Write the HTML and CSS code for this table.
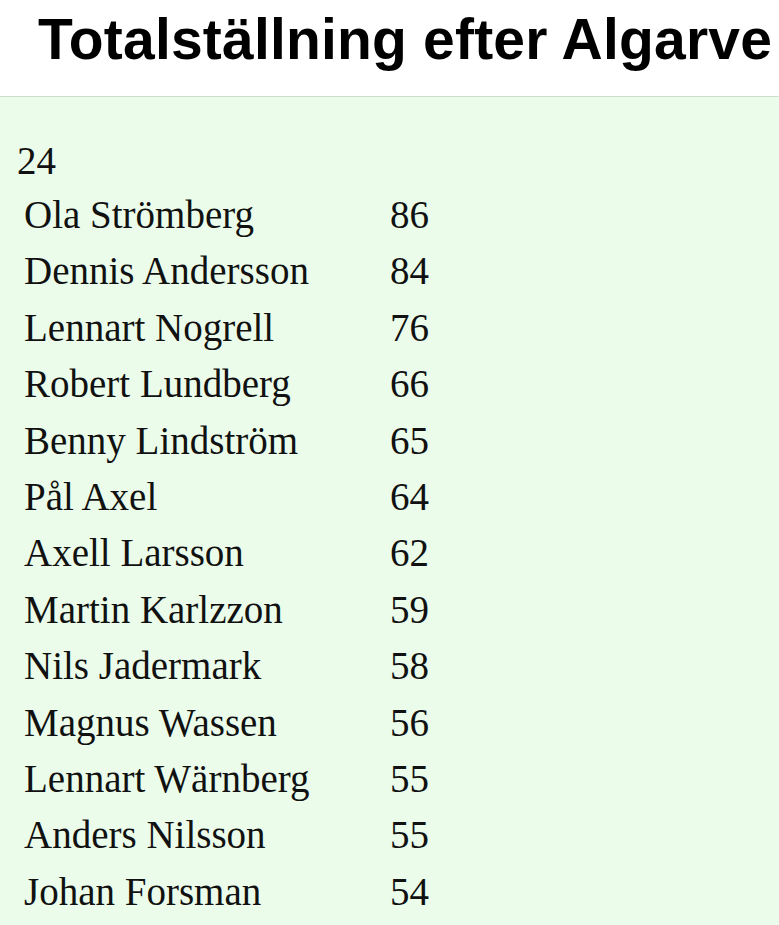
FILE: index.html
```html
<!DOCTYPE html>
<html lang="sv">
<head>
<meta charset="utf-8">
<title>Totalställning efter Algarve</title>
<link rel="stylesheet" href="styles.css">
</head>
<body>
<header class="header">
  <h1 class="title">Totalställning efter Algarve</h1>
</header>
<main class="content">
  <div class="count">24</div>
  <div class="standings">
    <div class="name">Ola Strömberg</div><div class="pts">86</div>
    <div class="name">Dennis Andersson</div><div class="pts">84</div>
    <div class="name">Lennart Nogrell</div><div class="pts">76</div>
    <div class="name">Robert Lundberg</div><div class="pts">66</div>
    <div class="name">Benny Lindström</div><div class="pts">65</div>
    <div class="name">Pål Axel</div><div class="pts">64</div>
    <div class="name">Axell Larsson</div><div class="pts">62</div>
    <div class="name">Martin Karlzzon</div><div class="pts">59</div>
    <div class="name">Nils Jadermark</div><div class="pts">58</div>
    <div class="name">Magnus Wassen</div><div class="pts">56</div>
    <div class="name">Lennart Wärnberg</div><div class="pts">55</div>
    <div class="name">Anders Nilsson</div><div class="pts">55</div>
    <div class="name">Johan Forsman</div><div class="pts">54</div>
  </div>
</main>
</body>
</html>
```
FILE: styles.css
```css
* { box-sizing: border-box; }
html, body { margin: 0; padding: 0; }
body {
  background: #ebfdea;
  color: #111;
  overflow: hidden;
}
.header {
  background: #ffffff;
  height: 97px;
  border-bottom: 1px solid #cfdccf;
  padding: 11px 0 0 38px;
}
.title {
  margin: 0;
  font-family: "Liberation Sans", Arial, sans-serif;
  font-weight: bold;
  font-size: 57px;
  line-height: 57px;
  color: #000;
  white-space: nowrap;
  letter-spacing: 0.2px;
}
.content {
  padding: 36px 0 0 17px;
  font-family: "Liberation Serif", "Times New Roman", serif;
  font-size: 39px;
  line-height: 56.4px;
}
.count {
  height: 54px;
}
.standings {
  display: grid;
  grid-template-columns: 366px auto;
  padding-left: 7px;
}
.pts { white-space: nowrap; }
```
